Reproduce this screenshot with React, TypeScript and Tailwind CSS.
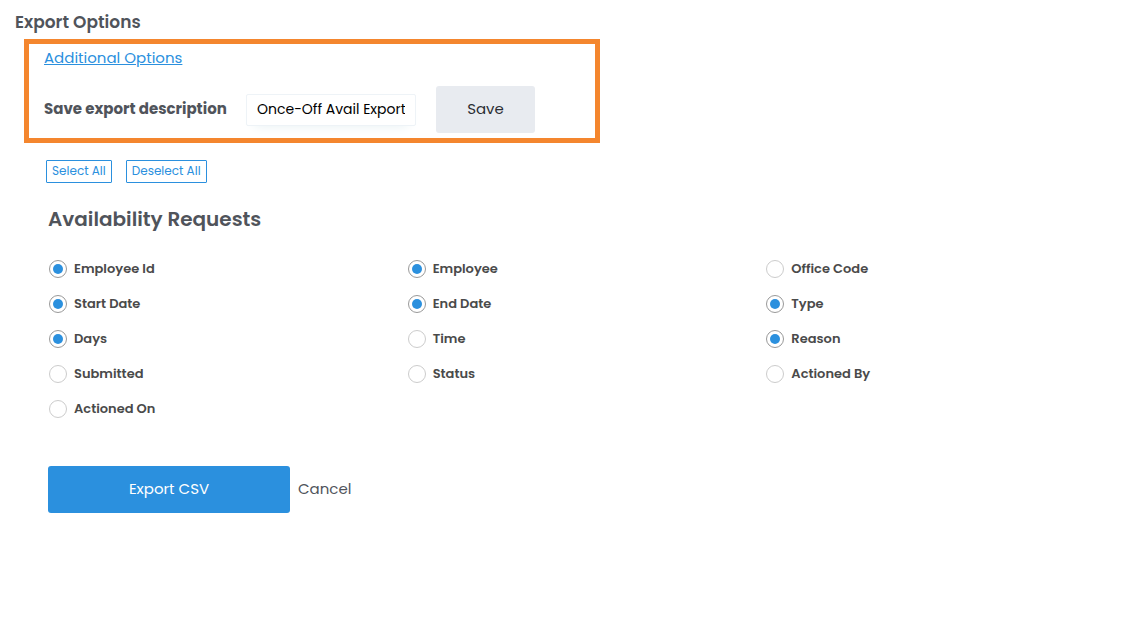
import { useState } from 'react';

const FIELDS = [
    { name: 'Employee Id', checked: true },
    { name: 'Employee', checked: true },
    { name: 'Office Code', checked: false },
    { name: 'Start Date', checked: true },
    { name: 'End Date', checked: true },
    { name: 'Type', checked: true },
    { name: 'Days', checked: true },
    { name: 'Time', checked: false },
    { name: 'Reason', checked: true },
    { name: 'Submitted', checked: false },
    { name: 'Status', checked: false },
    { name: 'Actioned By', checked: false },
    { name: 'Actioned On', checked: false },
];

const App = () => {
    const [fields, setFields] = useState(FIELDS);
    const [description, setDescription] = useState('Once-Off Avail Export');

    const toggle = (name: string) => {
        setFields(fields.map((f) => (f.name === name ? { ...f, checked: !f.checked } : f)));
    };

    const setAll = (checked: boolean) => {
        setFields(fields.map((f) => ({ ...f, checked })));
    };

    return (
        <main className="min-h-screen bg-white pt-2 pb-8 font-['Poppins','Inter',sans-serif] text-[#50545b]">
            <h1 className="pl-[15px] text-[17px] leading-7 font-semibold">Export Options</h1>

            <section className="mt-[3px] ml-6 max-w-xl border-5 border-[#f4862e] pb-[5px] pl-[15px]">
                <div className="h-7">
                    <a href="#additional" className="text-[15px] leading-7 text-[#2b90de] underline">Additional Options</a>
                </div>
                <div className="mt-[14px] flex items-center">
                    <label htmlFor="description" className="w-[202px] text-[15px] font-bold">Save export description</label>
                    <input
                        id="description"
                        type="text"
                        value={description}
                        onChange={(e) => setDescription(e.target.value)}
                        className="h-8 w-[170px] rounded-xs border border-[#eef3f7] px-[10px] text-[14px] text-black shadow-[0_8px_12px_-8px_#e6f0f3] outline-none"
                    />
                    <button type="button" className="ml-5 h-[47px] w-[99px] rounded-[3px] bg-[#e8ebf0] text-[15px] text-[#2b2e34]">
                        Save
                    </button>
                </div>
            </section>

            <div className="mt-[17px] ml-[46px] flex gap-[14px]">
                <button type="button" onClick={() => setAll(true)} className="h-[23px] rounded-[1px] border border-[#2b90de] px-[5px] pb-px text-[12px] leading-5 text-[#2b90de]">
                    Select All
                </button>
                <button type="button" onClick={() => setAll(false)} className="h-[23px] rounded-[1px] border border-[#2b90de] px-[5px] pb-px text-[12px] leading-5 text-[#2b90de]">
                    Deselect All
                </button>
            </div>

            <section className="mt-5 pr-[11px] pl-12">
                <h2 className="text-[20px] leading-8 font-semibold">Availability Requests</h2>
                <div className="mt-[25px] ml-px grid grid-cols-3 gap-y-[17px]">
                    {fields.map((field) => (
                        <label key={field.name} className="flex h-[18px] items-center gap-[7px] text-[13px] font-semibold text-[#4a4a4a]">
                            <input
                                type="checkbox"
                                checked={field.checked}
                                onChange={() => toggle(field.name)}
                                className="grid size-[18px] appearance-none place-items-center rounded-full border border-[#cccccc] before:size-[10px] before:rounded-full checked:border-[#999999] checked:before:bg-[#2b90de]"
                            />
                            {field.name}
                        </label>
                    ))}
                </div>

                <div className="mt-12 flex items-center gap-2">
                    <button type="button" className="h-[47px] w-[242px] rounded-[3px] bg-[#2b90de] text-[15px] text-white">
                        Export CSV
                    </button>
                    <a href="#cancel" className="text-[15px]">Cancel</a>
                </div>
            </section>
        </main>
    );
};

export default App;
